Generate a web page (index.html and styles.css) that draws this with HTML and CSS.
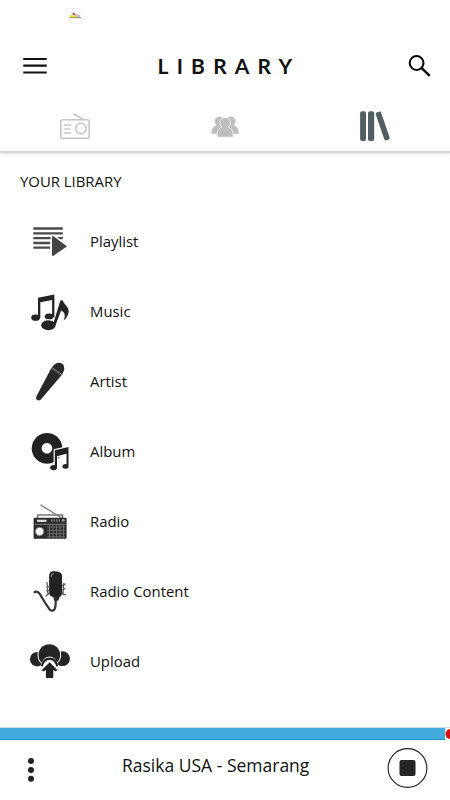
FILE: index.html
```html
<!DOCTYPE html>
<html lang="en">
<head>
<meta charset="utf-8">
<title>Library</title>
<link rel="stylesheet" href="styles.css">
</head>
<body>
<div class="app">
  <div class="status">
    <svg width="16" height="16" viewBox="0 0 16 16"><rect x=".5" y=".5" width="15" height="15" rx="2" fill="#fff" stroke="#f6f6f6"/><path d="M3 8h4V6h4v1h2v2h1v1H3z" fill="#c9c5bd"/><path d="M3 7h3v1h3v1h1v1H3z" fill="#eee02a"/><path d="M5 5h3v2H6z" fill="#d9505c"/><path d="M2 9.7h12" stroke="#777" stroke-width=".7"/></svg>
  </div>
  <header class="top">
    <svg class="menu" width="24" height="18" viewBox="0 0 24 18"><path d="M.3 2h23.4M.3 8.6h23.4M.3 15.5h23.4" stroke="#111" stroke-width="2.1"/></svg>
    <h1>LIBRARY</h1>
    <svg class="search" width="24" height="24" viewBox="0 0 24 24"><circle cx="8.6" cy="8" r="6.9" fill="none" stroke="#000" stroke-width="2"/><path d="M13.5 12.9l1.6 1.6M14.8 14.2l6.9 6.6" stroke="#000" stroke-width="2.4"/></svg>
  </header>
  <nav class="tabs">
    <svg width="50" height="45" viewBox="0 0 50 45"><g fill="none" stroke="#c6c6c6" stroke-width="1.6"><rect x="10.8" y="14.8" width="28.4" height="18.4" rx="2"/><circle cx="31" cy="23.5" r="5.3"/><path d="M23.8 9.2l9.2 4.8M14.3 20h6.4M14.8 24h4.9M14.3 28h6.4" stroke-linecap="round"/></g></svg>
    <svg width="50" height="45" viewBox="0 0 50 45"><g fill="#bebebe" stroke="#fff" stroke-width=".7"><path d="M11 29.2q0-7.6 5.2-9.1a5 5 0 1 1 6.2 0q4.5 2 4.5 9.1zM39.2 29.2q0-7.6-5.2-9.1a5 5 0 1 0-6.2 0q-4.5 2-4.5 9.1z"/><path d="M17 32.2q-.4-8.6 4.9-10.2a5.3 5.3 0 1 1 6.4 0q5.3 1.6 4.9 10.2z"/></g></svg>
    <svg width="50" height="45" viewBox="0 0 50 45"><g fill="#535e63"><rect x="10.1" y="6.3" width="5.9" height="29.7" rx="2"/><rect x="18" y="6.3" width="6.2" height="29.7" rx="2"/><rect x="29.9" y="6.2" width="5.7" height="29.6" rx="2" transform="rotate(-19 32.6 21.1)"/></g></svg>
  </nav>
  <main>
    <h2>YOUR LIBRARY</h2>
    <ul>
      <li><svg viewBox="0 -3 60 60"><path d="M13.3 13.5h29.5M13.3 18.3h29.5M13.3 23.2h29.5M13.3 28h17M13.3 32.7h17" stroke="#4b4b4b" stroke-width="2.3"/><path d="M32 22.8v17.5q.1 1.2 1.4.4L46.2 32q.9-.6 0-1.2L33.6 21.3q-1.6-.9-1.6 1.5z" fill="#444" stroke="#fff" stroke-width="3" paint-order="stroke"/></svg><span>Playlist</span></li>
      <li><svg viewBox="0 -3 60 60"><g fill="#242424"><ellipse cx="15.6" cy="32.7" rx="4.4" ry="3.1"/><ellipse cx="29.2" cy="31.4" rx="4.4" ry="3"/><path d="M18 33V12.8L34.4 9.4V32h-2.3V14.9l-11.8 2.3V33z"/><path d="M33 39.5L40.4 15.5l2.1-.2c2.1 5.3 8 7.3 5.7 13.8-.8 2.5-2.3 4.6-4.6 6.3 2.3-5 1.2-8.1-2.5-9.8L35.6 40z"/><ellipse cx="28.4" cy="40.2" rx="7.2" ry="5"/></g><path d="M21.5 36.5q5-3.6 11.3-1.2" stroke="#fff" stroke-width=".7" fill="none"/></svg><span>Music</span></li>
      <li><svg viewBox="0 -3 60 60"><g fill="#292929"><path d="M31.2 13.2L41.3 20.6 20.7 44.7q-2.3 1.5-4.3-.1-.8-1.3.2-3.5z"/><path d="M31.2 13.2q5.8-8 11.6-4 3.8 3.8-1.5 11.4z"/></g><path d="M31.8 12.5l10 7" stroke="#aaa" stroke-width=".7"/></svg><span>Artist</span></li>
      <li><svg viewBox="0 67 60 60"><path fill-rule="evenodd" d="M27 78a15.4 15.4 0 1 0 .1 0zM27 88a5.3 5.3 0 1 1-.1 0z" fill="#222"/><path d="M34.8 95.2l13.7-3.1v20.3a3.2 2.3 0 1 1-2-3.2v-10.4l-9.5 2.5v12a3.5 2.5 0 1 1-2.2-3z" fill="#222" stroke="#fff" stroke-width="2.4" stroke-linejoin="round" paint-order="stroke"/><path d="M36.8 98.5l9.7-2.4" stroke="#222" stroke-width="2.5"/></svg><span>Album</span></li>
      <li><svg viewBox="0 -3 60 60"><path d="M17.6 23v-3h25v3" fill="none" stroke="#777" stroke-width="1.5"/><path d="M21.2 10.3l21.5 13.2" stroke="#777" stroke-width="1.2"/><circle cx="21.2" cy="10.3" r="1" fill="#999"/><rect x="13.6" y="22.8" width="33" height="21" rx="1" fill="#2b2b2b"/><path d="M17 25.8h9.5" stroke="#ddd" stroke-width="2.2"/><path d="M31 25.5h9" stroke="#777" stroke-width="2.4" stroke-dasharray="1.5 1"/><circle cx="43.3" cy="25.3" r="1.5" fill="#999"/><path d="M14.5 29.3h31" stroke="#999" stroke-width=".8"/><circle cx="19.6" cy="36.5" r="4.2" fill="#fff" stroke="#777"/><path d="M27 32h18M27 35.3h18M27 38.6h18M27 41.8h18M29.5 30v13M33 30v13M36.5 30v13M40 30v13M43.5 30v13" stroke="#777" stroke-width=".8"/></svg><span>Radio</span></li>
      <li><svg viewBox="0 -3 60 60"><path d="M29.1 11q0-4.3 3.8-4.8 8.4-.3 9.1 3.8v17.3q0 4-2.3 4.5l-1.5 4h-4L33.2 32q-4.1-1-4.1-4.5z" fill="#222"/><path d="M31 12q0-3 2.7-3.4" stroke="#aaa" fill="none"/><path d="M35.7 33v4.7q-.2 10.5-5.8 7.2-3.3-4.6-7.4-11.4Q18 24.5 14.6 27.2" stroke="#333" stroke-width="2.2" fill="none" stroke-linecap="round"/><path d="M27 17l1 12M26 22l4-1M26 26l4-1M25.8 31l4-3M43.7 18l-.8 12M42 21l3.7-2.3M42 25l3.6-1.5M42 28l3.8 2.2" stroke="#555" stroke-width="1.2"/></svg><span>Radio Content</span></li>
      <li><svg viewBox="0 67 60 60"><g fill="#252525"><circle cx="17.2" cy="94.2" r="7.3"/><circle cx="42.5" cy="93.7" r="7.4"/><circle cx="29.3" cy="90" r="10.8" stroke="#fff" stroke-width="2" paint-order="stroke"/></g><path d="M20.3 102q2.6-10.4 9.2-10.4t9.1 10.4l-1 1h-16z" fill="#fff"/><path d="M21.8 101.3q2-7.6 7.8-7.6t7.7 7.6" fill="none" stroke="#222" stroke-width="2.2"/><path d="M29.7 97.3l7.6 7.8-1.4 1.5-2.6-1.6v6.9q0 1.2-1.2 1.2h-5q-1.2 0-1.2-1.2V105l-2.6 1.6-1.4-1.5z" fill="#222" stroke="#fff" stroke-width="1.6" paint-order="stroke"/></svg><span>Upload</span></li>
    </ul>
  </main>
  <footer>
    <div class="bar"><svg width="5" height="12" viewBox="0 0 5 12"><path d="M0 0h5v12H0z" fill="#fff"/><circle cx="5.5" cy="6" r="5.1" fill="#d80d0d"/></svg></div>
    <div class="player">
      <svg class="dots" width="8" height="26" viewBox="0 0 8 26"><g fill="#222"><circle cx="4" cy="4" r="3"/><circle cx="4" cy="13" r="3"/><circle cx="4" cy="21.7" r="3"/></g></svg>
      <p>Rasika USA - Semarang</p>
      <svg class="stop" width="42" height="42" viewBox="0 0 42 42"><circle cx="21.5" cy="21" r="19.4" fill="#fff" stroke="#222" stroke-width="1.1"/><rect x="13.5" y="13" width="16" height="16" rx="2" fill="#252525"/></svg>
    </div>
  </footer>
</div>
</body>
</html>
```
FILE: styles.css
```css
* { box-sizing: border-box; margin: 0; padding: 0; }
body { background: #fff; color: #111; font-family: "Open Sans", sans-serif; }
svg { display: block; flex: none; }
.app { width: 450px; height: 800px; display: flex; flex-direction: column; overflow: hidden; }
.status { height: 40px; padding: 8px 0 0 67px; }
.top { height: 65px; display: flex; align-items: flex-start; justify-content: space-between; padding: 15px 18px 0 23px; }
.menu { margin-top: 2px; }
h1 { font: 700 21px/24px Lato, sans-serif; letter-spacing: 8.2px; margin: -1px 0 0 3px; }
.tabs { height: 46px; display: flex; justify-content: space-between; padding: 0 50px; box-shadow: 0 2px 1px #d6d6d6, 0 4px 3px #eee; }
main { flex: 1; padding: 19px 20px 0; }
h2 { font-size: 14.9px; font-weight: 400; line-height: 22px; }
ul { list-style: none; padding-top: 15px; }
li { height: 70px; display: flex; align-items: center; gap: 10px; font-size: 14.9px; }
li svg { width: 60px; height: 60px; }
li span { margin-top: -2px; }
footer { height: 73px; }
.bar { height: 13px; background: #42aadd; border-top: 1px solid #c9dce6; border-bottom: 1px solid #1899d2; display: flex; justify-content: flex-end; }
.player { height: 60px; display: flex; align-items: center; padding: 0 22px 0 27px; }
.player p { flex: 1; font-size: 17.5px; line-height: 24px; padding-left: 87px; margin-top: -10px; white-space: nowrap; }
.stop { margin-top: -4px; }
```
